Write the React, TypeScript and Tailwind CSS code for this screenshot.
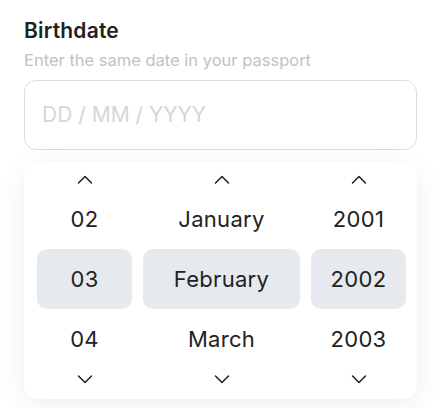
import { useState } from 'react'

const days = ['02', '03', '04']
const months = ['January', 'February', 'March']
const years = ['2001', '2002', '2003']

function Chevron({ dir }: { dir: 'up' | 'down' }) {
  return (
    <svg width="16" height="10" viewBox="0 0 16 10" fill="none" className="text-[#1f1f1f]">
      <polyline
        points={dir === 'up' ? '1.5,8 8,1.5 14.5,8' : '1.5,2 8,8.5 14.5,2'}
        stroke="currentColor"
        strokeWidth="1.5"
        strokeLinecap="round"
        strokeLinejoin="round"
      />
    </svg>
  )
}

function Column({ items, selected }: { items: string[]; selected: number }) {
  return (
    <div className="flex flex-col items-stretch">
      <div className="h-[27px] flex items-center justify-center pt-[9px]">
        <Chevron dir="up" />
      </div>
      {items.map((item, i) => (
        <div
          key={item}
          className={`h-[60px] flex items-center justify-center text-[22px] tracking-[0.3px] text-[#222222] rounded-[10px] ${
            i === selected ? 'bg-[#e6eaee]' : ''
          }`}
        >
          {item}
        </div>
      ))}
      <div className="h-[18px] flex items-center justify-center pt-[1px]">
        <Chevron dir="down" />
      </div>
    </div>
  )
}

export default function App() {
  const [value] = useState('')

  return (
    <div className="min-h-screen bg-white pl-6 pr-[21px] pt-[18px]" style={{ fontFamily: 'Inter, "Noto Sans", sans-serif' }}>
      <h1 className="text-[21px] leading-[26px] font-semibold tracking-[0.2px] text-[#222222]">Birthdate</h1>
      <p className="mt-[6px] text-[16.5px] leading-[20px] text-[#c2c2c2]">Enter the same date in your passport</p>

      <div className="mt-[10px] h-[70px] border border-[#dcdcdc] rounded-[12px] flex items-center px-[17px]">
        <input
          value={value}
          readOnly
          placeholder="DD / MM / YYYY"
          className="w-full bg-transparent outline-none text-[21px] placeholder:text-[#d6d6d6]"
        />
      </div>

      <div className="mt-[12px] bg-white rounded-[14px] shadow-[0_6px_28px_rgba(0,0,0,0.07)] pl-[13px] pr-[11px] pb-[12px]">
        <div className="grid grid-cols-[95px_157px_95px] gap-[11px]">
          <Column items={days} selected={1} />
          <Column items={months} selected={1} />
          <Column items={years} selected={1} />
        </div>
      </div>
    </div>
  )
}
